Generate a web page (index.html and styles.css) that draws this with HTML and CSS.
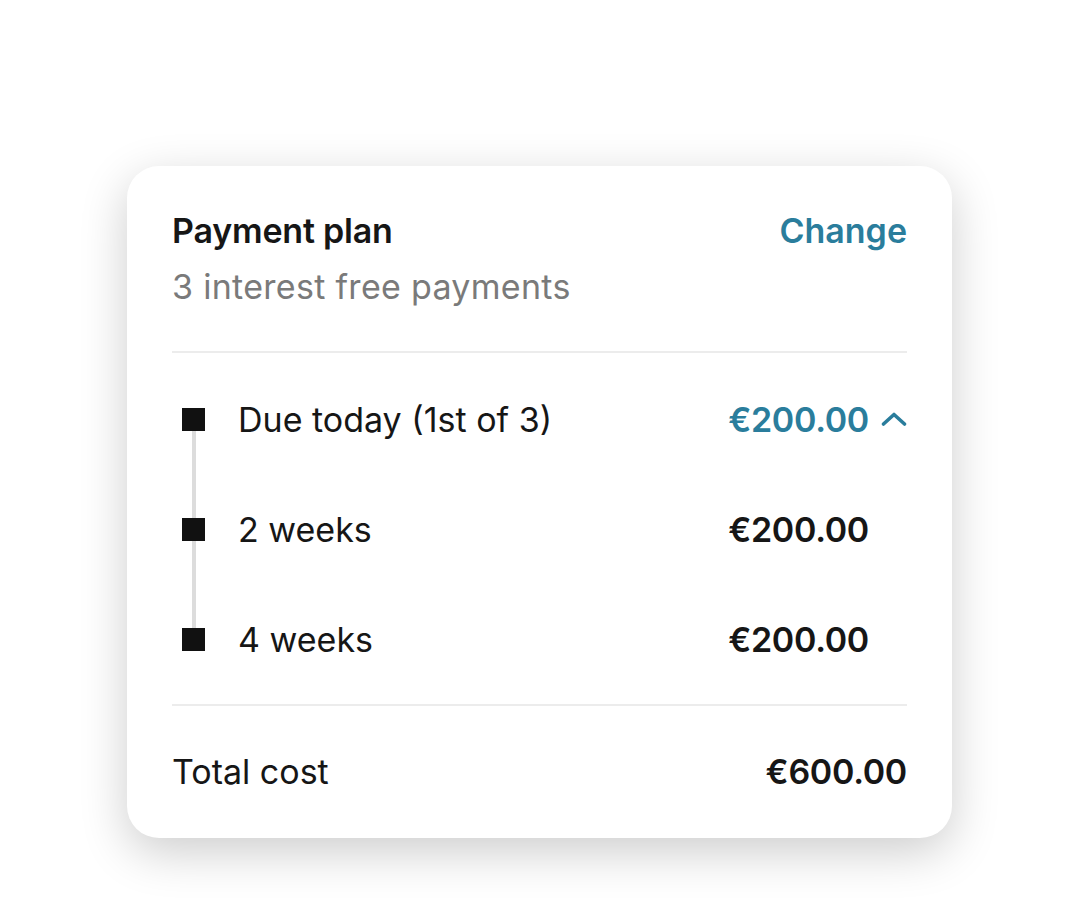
FILE: index.html
```html
<!DOCTYPE html>
<html lang="en">
<head>
    <meta charset="UTF-8">
    <meta name="viewport" content="width=device-width, initial-scale=1.0">
    <title>Payment plan</title>
    <link rel="stylesheet" href="styles.css">
</head>
<body>
    <div class="card">
        <div class="plan-head">
            <div>
                <h2 class="plan-title">Payment plan</h2>
                <p class="plan-sub">3 interest free payments</p>
            </div>
            <a class="change" href="#">Change</a>
        </div>

        <div class="schedule">
            <div class="row">
                <span class="dot"></span>
                <span class="label">Due today (1st of 3)</span>
                <span class="amount due">€200.00</span>
                <span class="toggle">
                    <svg width="26" height="14" viewBox="0 0 26 14">
                        <path d="M2.5 12 L13 2.5 L23.5 12" fill="none" stroke="#2a7d9c" stroke-width="3.6" stroke-linecap="round" stroke-linejoin="round"/>
                    </svg>
                </span>
            </div>
            <div class="row">
                <span class="dot"></span>
                <span class="label">2 weeks</span>
                <span class="amount">€200.00</span>
                <span class="toggle"></span>
            </div>
            <div class="row">
                <span class="dot"></span>
                <span class="label">4 weeks</span>
                <span class="amount">€200.00</span>
                <span class="toggle"></span>
            </div>
        </div>

        <div class="total">
            <span>Total cost</span>
            <span class="amount">€600.00</span>
        </div>
    </div>
</body>
</html>
```

FILE: styles.css
```css
body {
    font-family: Inter, "Noto Sans", sans-serif;
    background-color: #fff;
    color: #161616;
    margin: 0;
    padding: 166px 0 82px 127px;
}
.card {
    width: 825px;
    height: 672px;
    box-sizing: border-box;
    padding: 0 45px;
    background: #fff;
    border-radius: 32px;
    box-shadow: 0 14px 48px rgba(0, 0, 0, 0.2);
}
.plan-head {
    display: flex;
    justify-content: space-between;
    align-items: flex-start;
    padding: 47px 0 46px;
    border-bottom: 2px solid #ececec;
}
.plan-title {
    margin: 0;
    font-size: 34px;
    line-height: 36px;
    font-weight: 600;
    letter-spacing: -0.2px;
}
.plan-sub {
    margin: 20px 0 0;
    font-size: 34px;
    line-height: 36px;
    color: #7a7a7a;
    letter-spacing: 0.3px;
}
.change {
    font-size: 34px;
    line-height: 36px;
    font-weight: 600;
    color: #2a7d9c;
    text-decoration: none;
}
.schedule {
    position: relative;
    padding: 11px 0 10px;
    border-bottom: 2px solid #ececec;
}
.schedule::before {
    content: "";
    position: absolute;
    left: 20px;
    top: 66px;
    bottom: 76px;
    width: 4px;
    background: #dcdcdc;
}
.row {
    display: flex;
    align-items: center;
    height: 110px;
    font-size: 34px;
}
.dot {
    position: relative;
    z-index: 1;
    width: 23px;
    height: 23px;
    margin-left: 10px;
    background: #111;
}
.label {
    margin-left: 33px;
    flex: 1;
}
.amount {
    font-weight: 600;
    letter-spacing: -0.3px;
}
.due {
    color: #2a7d9c;
}
.toggle {
    width: 38px;
    display: flex;
    justify-content: flex-end;
}
.total {
    display: flex;
    justify-content: space-between;
    align-items: center;
    padding: 48px 0;
    font-size: 34px;
    line-height: 36px;
}
```
